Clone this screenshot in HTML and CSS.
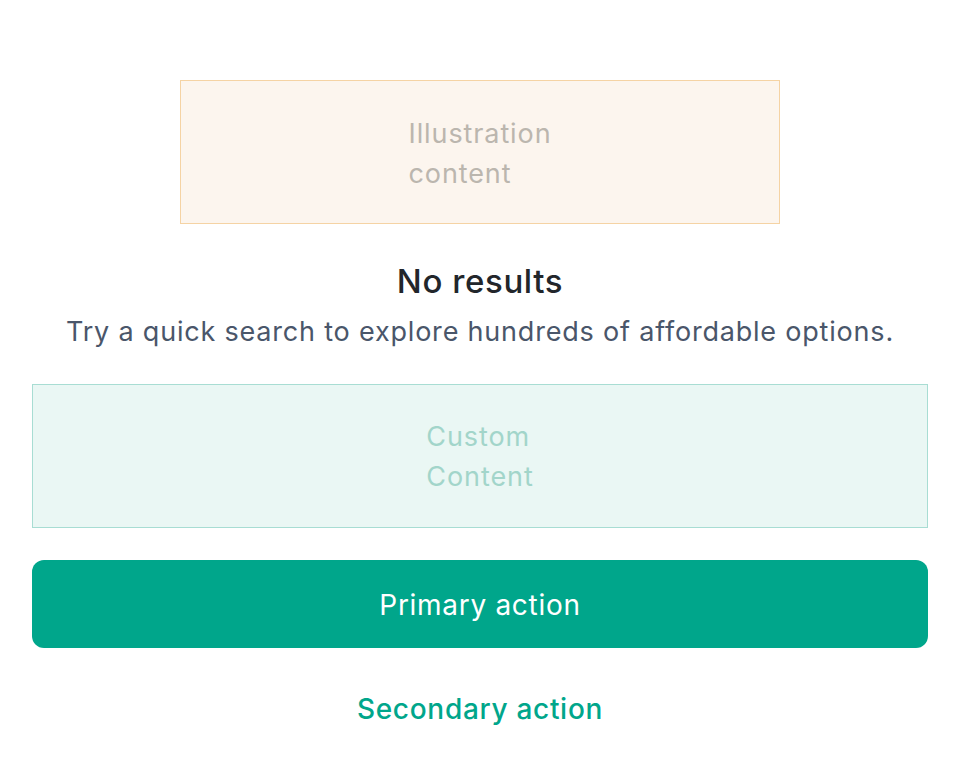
FILE: index.html
```html
<!DOCTYPE html>
<html lang="en">
<head>
<meta charset="utf-8">
<title>No results</title>
<link rel="stylesheet" href="styles.css">
</head>
<body>
<main class="empty-state">
  <div class="illustration"><span class="placeholder-text">Illustration content</span></div>
  <div class="copy">
    <h1 class="title">No results</h1>
    <p class="subtitle">Try a quick search to explore hundreds of affordable options.</p>
  </div>
  <div class="custom"><span class="placeholder-text">Custom Content</span></div>
  <div class="actions">
    <button class="btn-primary" type="button">Primary action</button>
    <button class="btn-secondary" type="button">Secondary action</button>
  </div>
</main>
</body>
</html>
```
FILE: styles.css
```css
* { box-sizing: border-box; }
html, body { margin: 0; padding: 0; background: #ffffff; }
body {
  font-family: Inter, "Noto Sans", "Liberation Sans", sans-serif;
  -webkit-font-smoothing: antialiased;
}
.empty-state {
  display: flex;
  flex-direction: column;
  align-items: center;
  padding: 80px 32px 0;
}
.illustration {
  width: 600px;
  height: 144px;
  padding-top: 3px;
  background: #fcf5ee;
  border: 1px solid #f5d3a4;
  display: flex;
  align-items: center;
  justify-content: center;
  color: #bbb6ae;
}
.placeholder-text {
  width: min-content;
  font-size: 27px;
  letter-spacing: 0.9px;
  line-height: 40px;
  text-align: left;
}
.copy {
  margin-top: 33px;
  display: flex;
  flex-direction: column;
  align-items: center;
  gap: 7px;
  text-align: center;
}
.title {
  margin: 0;
  font-size: 33px;
  letter-spacing: 0.6px;
  line-height: 48px;
  font-weight: 500;
  color: #22262b;
}
.subtitle {
  margin: 0;
  font-size: 27px;
  letter-spacing: 0.8px;
  line-height: 40px;
  color: #4a566a;
}
.custom {
  margin-top: 32px;
  width: 100%;
  height: 144px;
  padding-top: 1px;
  background: #eaf7f4;
  border: 1px solid #a8ddd3;
  display: flex;
  align-items: center;
  justify-content: center;
  color: #a2d5ca;
}
.actions {
  margin-top: 32px;
  width: 100%;
  display: flex;
  flex-direction: column;
  gap: 16px;
}
.btn-primary, .btn-secondary {
  font-family: inherit;
  font-size: 28px;
  letter-spacing: 0.7px;
  line-height: 40px;
  height: 88px;
  width: 100%;
  border: 0;
  cursor: pointer;
}
.btn-primary {
  background: #00a68b;
  color: #ffffff;
  border-radius: 12px;
  padding-top: 2px;
}
.btn-secondary {
  background: transparent;
  color: #00a68b;
  font-weight: 500;
  padding-top: 2px;
}
```
